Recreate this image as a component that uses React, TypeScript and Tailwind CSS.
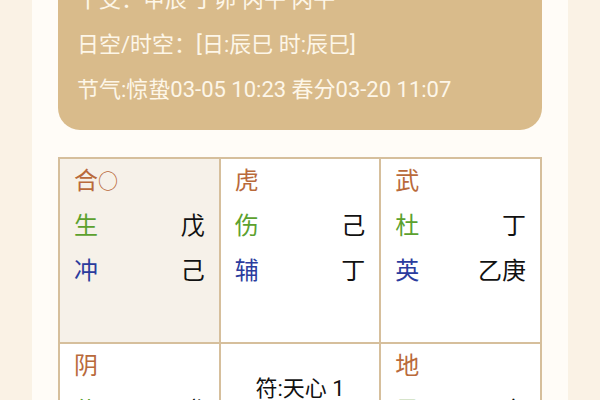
import React from 'react';

type Cell = {
  god: string;
  bg?: string;
  lines: { left: string; right: string; color: string }[];
  center?: string;
};

const BROWN = 'text-[#b96a3b]';

const cells: Cell[] = [
  {
    god: '合○',
    bg: 'bg-[#f6f1e9]',
    lines: [
      { left: '生', right: '戊', color: 'text-[#5ca12e]' },
      { left: '冲', right: '己', color: 'text-[#2b3c9e]' },
    ],
  },
  {
    god: '虎',
    lines: [
      { left: '伤', right: '己', color: 'text-[#5ca12e]' },
      { left: '辅', right: '丁', color: 'text-[#2b3c9e]' },
    ],
  },
  {
    god: '武',
    lines: [
      { left: '杜', right: '丁', color: 'text-[#5ca12e]' },
      { left: '英', right: '乙庚', color: 'text-[#2b3c9e]' },
    ],
  },
  {
    god: '阴',
    lines: [{ left: '休', right: '癸', color: 'text-[#5ca12e]' }],
  },
  { god: '', lines: [], center: '符:天心 1' },
  {
    god: '地',
    lines: [{ left: '景', right: '丁辛', color: 'text-[#5ca12e]' }],
  },
];

function PalaceCell({ cell, tall }: { cell: Cell; tall: boolean }) {
  if (cell.center) {
    return (
      <div
        className={`border-r-2 border-b-2 border-[#d6bf9c] bg-white pt-[22px] text-center text-[22px] leading-[45px] text-[#111] ${
          tall ? 'h-[185px]' : 'h-[120px]'
        }`}
      >
        {cell.center}
      </div>
    );
  }
  return (
    <div
      className={`border-r-2 border-b-2 border-[#d6bf9c] px-[14px] text-[24px] ${cell.bg ?? 'bg-white'} ${
        tall ? 'h-[185px]' : 'h-[120px]'
      }`}
    >
      <div className={`h-[45px] leading-[45px] ${BROWN}`}>
        {cell.god.startsWith('合') ? (
          <span>
            合<span className="text-[20px] text-[#b96a3b]">○</span>
          </span>
        ) : (
          cell.god
        )}
      </div>
      {cell.lines.map((l) => (
        <div key={l.left} className="flex h-[45px] justify-between leading-[45px]">
          <span className={l.color}>{l.left}</span>
          <span className="text-[#111]">{l.right}</span>
        </div>
      ))}
    </div>
  );
}

export default function App() {
  return (
    <div
      className="h-[400px] w-[600px] overflow-hidden bg-[#faf2e5] px-[32px]"
      style={{ fontFamily: "Roboto, 'Noto Sans CJK SC', sans-serif" }}
    >
      <div className="flex h-full flex-col bg-[#fffcf7] px-[26px]">
        <div className="-mt-[40px] rounded-[22px] bg-[#d9bb8b] pt-[17px] pb-[18px] pl-[19px] text-[22px] text-[#fdf6e8]">
          <div className="h-[45px] leading-[45px]">干支：甲辰 丁卯 丙午 丙午</div>
          <div className="h-[45px] leading-[45px]">日空/时空：[日:辰巳 时:辰巳]</div>
          <div className="h-[45px] leading-[45px]">节气:惊蛰03-05 10:23 春分03-20 11:07</div>
        </div>

        <div className="mt-[27px] grid grid-cols-3 border-t-2 border-l-2 border-[#d6bf9c]">
          {cells.map((c, i) => (
            <PalaceCell key={i} cell={c} tall={i < 3} />
          ))}
        </div>
      </div>
    </div>
  );
}
